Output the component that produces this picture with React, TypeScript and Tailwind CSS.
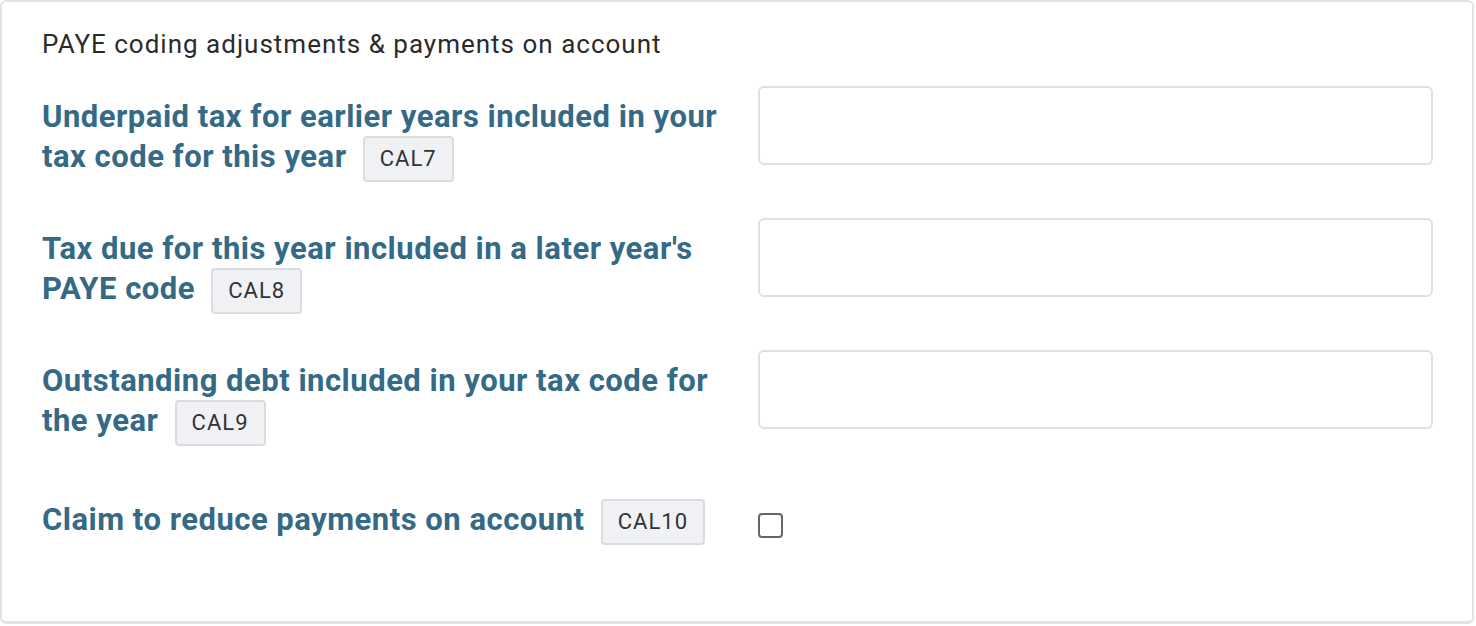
import React from 'react'

interface FieldRow {
  label: string
  code: string
  kind: 'text' | 'checkbox'
}

const rows: FieldRow[] = [
  { label: 'Underpaid tax for earlier years included in your tax code for this year', code: 'CAL7', kind: 'text' },
  { label: "Tax due for this year included in a later year's PAYE code", code: 'CAL8', kind: 'text' },
  { label: 'Outstanding debt included in your tax code for the year', code: 'CAL9', kind: 'text' },
  { label: 'Claim to reduce payments on account', code: 'CAL10', kind: 'checkbox' },
]

const CodeBadge = ({ code }: { code: string }) => (
  <span className="ml-[8px] inline-flex h-[46px] items-center rounded-[4px] border-2 border-[#dcdcdc] bg-[#f0f1f4] px-[15px] align-middle text-[22px] font-normal leading-none tracking-[1px] text-[#333]">
    {code}
  </span>
)

export default function App() {
  return (
    <div className="h-[626px] w-[1476px] bg-white font-['Roboto',sans-serif]">
      <div className="h-[624px] w-[1474px] rounded-[6px] border-2 border-b-[3px] border-[#e3e3e3] pl-[40px] pr-[39px] pt-[26px]">
        {/* Section title */}
        <h2 className="text-[26px] leading-[32px] tracking-[1px] text-[#2b2b2b]">
          PAYE coding adjustments &amp; payments on account
        </h2>

        <div className="mt-[26px] flex flex-col">
          {rows.map((row) =>
            row.kind === 'text' ? (
              <div key={row.code} className="flex h-[132px] items-start gap-[16px]">
                <label className="w-[700px] pt-[12px] text-[31px] font-bold leading-[38px] tracking-[0.5px] text-[#346a86]">
                  {row.label} <CodeBadge code={row.code} />
                </label>
                <input
                  type="text"
                  className="h-[79px] flex-1 rounded-[6px] border-2 border-[#e0e0e0] bg-white px-3 outline-none"
                />
              </div>
            ) : (
              <div key={row.code} className="flex items-start gap-[16px]">
                <label className="w-[700px] pt-[17px] text-[31px] font-bold leading-[38px] tracking-[0.5px] text-[#346a86]">
                  {row.label} <CodeBadge code={row.code} />
                </label>
                <span className="mt-[31px] block h-[25px] w-[25px] rounded-[4px] border-2 border-[#666] bg-white" />
              </div>
            ),
          )}
        </div>
      </div>
    </div>
  )
}
